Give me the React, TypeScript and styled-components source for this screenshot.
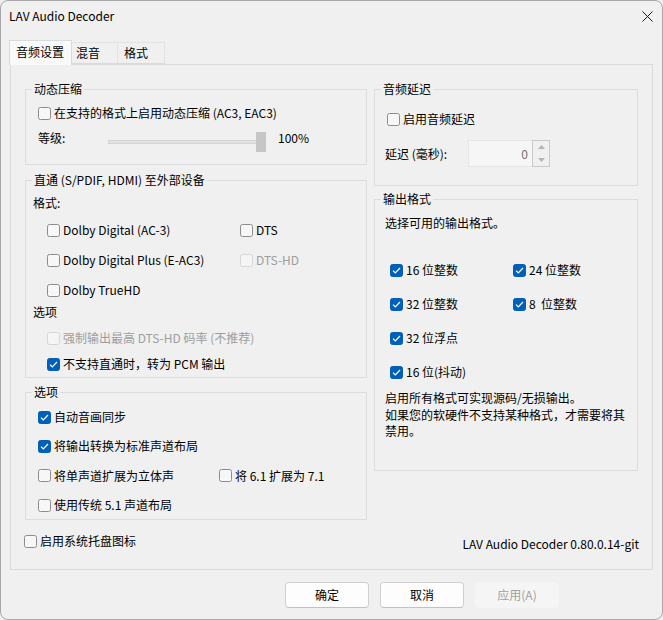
import React from "react";
import styled, { createGlobalStyle } from "styled-components";

const Global = createGlobalStyle`
  html, body { margin: 0; padding: 0; background: #f0f0f0; }
  body {
    font-family: "Noto Sans CJK SC", "Noto Sans", sans-serif;
    font-size: 12px;
    line-height: 16px;
    color: #000;
  }
  * { box-sizing: border-box; }
`;

const Window = styled.div`
  width: 663px;
  height: 620px;
  border: 1px solid #a8a8a8;
  border-radius: 8px;
  background: #f0f0f0;
  overflow: hidden;
  display: flex;
  flex-direction: column;
`;

const TitleBar = styled.div`
  height: 29px;
  display: flex;
  align-items: center;
  justify-content: space-between;
  padding: 0 9px 0 8px;
`;

const Title = styled.span`
  font-size: 12px;
  line-height: 16px;
`;

const CloseButton = styled.div`
  width: 12px;
  height: 12px;
  display: flex;
  align-items: center;
  justify-content: center;
  margin-top: 1px;
`;

const Body = styled.div`
  padding: 0 0 0 8px;
  display: flex;
  flex-direction: column;
`;

const TabStrip = styled.div`
  margin-top: 10px;
  height: 24px;
  display: flex;
  align-items: flex-end;
  position: relative;
  z-index: 1;
`;

const Tab = styled.div<{ $active?: boolean; $w: number; $last?: boolean; $pl: number }>`
  width: ${(p) => p.$w}px;
  height: ${(p) => (p.$active ? 25 : 22)}px;
  margin-bottom: ${(p) => (p.$active ? -1 : 0)}px;
  background: ${(p) => (p.$active ? "#f9f9f9" : "#f0f0f0")};
  border: 1px solid ${(p) => (p.$active ? "#dadada" : "#e3e3e3")};
  border-bottom: ${(p) => (p.$active ? "none" : "1px solid #dadada")};
  border-left-width: ${(p) => (p.$active ? 1 : 0)}px;
  border-right-width: ${(p) => (p.$active || p.$last ? 1 : 1)}px;
  display: flex;
  align-items: center;
  padding-left: ${(p) => p.$pl}px;
  padding-bottom: ${(p) => (p.$active ? 2 : 0)}px;
  font-size: 12px;
`;

const Panel = styled.div`
  margin-left: 1px;
  width: 643px;
  height: 506px;
  border: 1px solid #dadada;
  background: #f0f0f0;
  padding: 16px 13px 0 14px;
  display: grid;
  grid-template-columns: 342px 264px;
  column-gap: 7px;
  row-gap: 13px;
  align-content: start;
`;

const Column = styled.div`
  display: flex;
  flex-direction: column;
`;

const Group = styled.fieldset<{ $h: number; $mt?: number }>`
  margin: ${(p) => p.$mt ?? 0}px 0 0 0;
  height: ${(p) => p.$h}px;
  min-width: 0;
  border: 1px solid #dcdcdc;
  padding: 0;
  display: block;
`;

const Legend = styled.legend`
  margin-left: 6px;
  padding: 0 2px;
  font-size: 12px;
  line-height: 16px;
`;

const GroupBody = styled.div<{ $pt: number; $pl: number }>`
  padding: ${(p) => p.$pt}px 0 0 ${(p) => p.$pl}px;
`;

const Row = styled.div<{ $mt?: number; $ml?: number }>`
  display: flex;
  align-items: center;
  margin-top: ${(p) => p.$mt ?? 0}px;
  margin-left: ${(p) => p.$ml ?? 0}px;
`;

const Text = styled.div<{ $mt?: number; $disabled?: boolean }>`
  margin-top: ${(p) => p.$mt ?? 0}px;
  color: ${(p) => (p.$disabled ? "#9d9d9d" : "#000")};
  white-space: nowrap;
`;

const CheckGrid = styled.div<{ $cols: string; $gap: number; $mt?: number; $pl?: number }>`
  display: grid;
  grid-template-columns: ${(p) => p.$cols};
  row-gap: ${(p) => p.$gap}px;
  margin-top: ${(p) => p.$mt ?? 0}px;
  padding-left: ${(p) => p.$pl ?? 0}px;
`;

const CheckLabel = styled.label<{ $disabled?: boolean }>`
  display: flex;
  align-items: center;
  gap: 3px;
  height: 16px;
  white-space: nowrap;
  color: ${(p) => (p.$disabled ? "#9d9d9d" : "#000")};
`;

const Box = styled.span<{ $checked?: boolean; $disabled?: boolean }>`
  width: 13px;
  height: 13px;
  flex: none;
  border-radius: 2.5px;
  border: 1px solid
    ${(p) => (p.$checked ? "#005fb8" : p.$disabled ? "#d6d6d6" : "#8c8c8c")};
  background: ${(p) => (p.$checked ? "#005fb8" : p.$disabled ? "#f5f5f5" : "#f7f7f7")};
  display: flex;
  align-items: center;
  justify-content: center;
`;

const Check: React.FC<{ checked?: boolean; disabled?: boolean; children: React.ReactNode }> = ({
  checked,
  disabled,
  children,
}) => (
  <CheckLabel $disabled={disabled}>
    <Box $checked={checked} $disabled={disabled}>
      {checked && (
        <svg width="11" height="11" viewBox="0 0 11 11">
          <path d="M2 5.6 L4.3 7.9 L9 3" fill="none" stroke="#fff" strokeWidth="1.25" />
        </svg>
      )}
    </Box>
    <span>{children}</span>
  </CheckLabel>
);

const LevelRow = styled.div`
  display: flex;
  align-items: flex-start;
  margin-top: 9px;
  height: 22px;
`;

const LevelLabel = styled.div`
  width: 70px;
`;

const Slider = styled.div`
  width: 158px;
  height: 22px;
  display: flex;
  align-items: flex-start;
`;

const Track = styled.div`
  width: 148px;
  height: 4px;
  margin-top: 10px;
  background: #e3e3e3;
  border: 1px solid #d4d4d4;
  border-right: none;
`;

const Thumb = styled.div`
  width: 10px;
  height: 20px;
  margin-top: 2px;
  background: #c6c6c6;
`;

const Percent = styled.div`
  margin-left: 12px;
`;

const DelayLabel = styled.div`
  width: 83px;
`;

const SpinBox = styled.div`
  width: 82px;
  height: 27px;
  display: flex;
  border: 1px solid #e6e6e6;
  background: #f6f6f6;
`;

const SpinField = styled.div`
  flex: 1;
  display: flex;
  align-items: center;
  justify-content: flex-end;
  padding-right: 4px;
  color: #6e6e6e;
`;

const SpinButtons = styled.div`
  width: 18px;
  margin: -1px -1px -1px 0;
  border: 1px solid #c9c9c9;
  display: flex;
  flex-direction: column;
  background: #f0f0f0;
`;

const SpinHalf = styled.div`
  flex: 1;
  display: flex;
  align-items: center;
  justify-content: center;
`;

const Description = styled.div`
  margin-top: 10px;
  line-height: 16.5px;
`;

const BottomRow = styled.div`
  grid-column: 1 / span 2;
  display: flex;
  justify-content: space-between;
  align-items: flex-start;
  margin: 0 -1px 0 -1px;
`;

const Version = styled.div`
  margin-top: 3px;
`;

const ButtonRow = styled.div`
  margin-top: 12px;
  display: flex;
  justify-content: flex-end;
  gap: 11px;
  padding-right: 103px;
`;

const Button = styled.div<{ $disabled?: boolean }>`
  width: 84px;
  height: 26px;
  border-radius: 4px;
  display: flex;
  align-items: center;
  justify-content: center;
  background: ${(p) => (p.$disabled ? "#f5f5f5" : "#fdfdfd")};
  border: 1px solid ${(p) => (p.$disabled ? "#f5f5f5" : "#d0d0d0")};
  border-bottom-color: ${(p) => (p.$disabled ? "#f5f5f5" : "#c2c2c2")};
  color: ${(p) => (p.$disabled ? "#a0a0a0" : "#000")};
`;

const SpinArrow: React.FC<{ up?: boolean }> = ({ up }) => (
  <SpinHalf>
    <svg width="7" height="4" viewBox="0 0 7 4">
      <path d={up ? "M0 4 L3.5 0 L7 4 Z" : "M0 0 L3.5 4 L7 0 Z"} fill="#b4b4b4" />
    </svg>
  </SpinHalf>
);

export default function App() {
  return (
    <>
      <Global />
      <Window>
        <TitleBar>
          <Title>LAV Audio Decoder</Title>
          <CloseButton>
            <svg width="11" height="11" viewBox="0 0 11 11">
              <path d="M0.5 0.5 L10.5 10.5 M10.5 0.5 L0.5 10.5" stroke="#1a1a1a" strokeWidth="1" />
            </svg>
          </CloseButton>
        </TitleBar>
        <Body>
          <TabStrip>
            <Tab $active $w={63} $pl={6}>音频设置</Tab>
            <Tab $w={46} $pl={4}>混音</Tab>
            <Tab $w={47} $pl={6} $last>格式</Tab>
          </TabStrip>
          <Panel>
            <Column>
              <Group $h={84}>
                <Legend>动态压缩</Legend>
                <GroupBody $pt={8} $pl={12}>
                  <Check>在支持的格式上启用动态压缩 (AC3, EAC3)</Check>
                  <LevelRow>
                    <LevelLabel>等级:</LevelLabel>
                    <Slider>
                      <Track />
                      <Thumb />
                    </Slider>
                    <Percent>100%</Percent>
                  </LevelRow>
                </GroupBody>
              </Group>
              <Group $h={206} $mt={7}>
                <Legend>直通 (S/PDIF, HDMI) 至外部设备</Legend>
                <GroupBody $pt={7} $pl={7}>
                  <Text>格式:</Text>
                  <CheckGrid $cols="193px auto" $gap={14} $mt={11} $pl={14}>
                    <Check>Dolby Digital (AC-3)</Check>
                    <Check>DTS</Check>
                    <Check>Dolby Digital Plus (E-AC3)</Check>
                    <Check disabled>DTS-HD</Check>
                    <Check>Dolby TrueHD</Check>
                  </CheckGrid>
                  <Text $mt={6}>选项</Text>
                  <CheckGrid $cols="auto" $gap={10} $mt={10} $pl={14}>
                    <Check disabled>强制输出最高 DTS-HD 码率 (不推荐)</Check>
                    <Check checked>不支持直通时，转为 PCM 输出</Check>
                  </CheckGrid>
                </GroupBody>
              </Group>
              <Group $h={136} $mt={6}>
                <Legend>选项</Legend>
                <GroupBody $pt={9} $pl={12}>
                  <CheckGrid $cols="181px auto" $gap={13.4}>
                    <Check checked>自动音画同步</Check>
                    <span />
                    <Check checked>将输出转换为标准声道布局</Check>
                    <span />
                    <Check>将单声道扩展为立体声</Check>
                    <Check>将 6.1 扩展为 7.1</Check>
                    <Check>使用传统 5.1 声道布局</Check>
                  </CheckGrid>
                </GroupBody>
              </Group>
            </Column>
            <Column>
              <Group $h={105}>
                <Legend>音频延迟</Legend>
                <GroupBody $pt={14} $pl={12}>
                  <Check>启用音频延迟</Check>
                  <Row $mt={13} $ml={-2}>
                    <DelayLabel>延迟 (毫秒):</DelayLabel>
                    <SpinBox>
                      <SpinField>0</SpinField>
                      <SpinButtons>
                        <SpinArrow up />
                        <SpinArrow />
                      </SpinButtons>
                    </SpinBox>
                  </Row>
                </GroupBody>
              </Group>
              <Group $h={280} $mt={5}>
                <Legend>输出格式</Legend>
                <GroupBody $pt={8} $pl={10}>
                  <Text>选择可用的输出格式。</Text>
                  <CheckGrid $cols="123px auto" $gap={18} $mt={31} $pl={5}>
                    <Check checked>16 位整数</Check>
                    <Check checked>24 位整数</Check>
                    <Check checked>32 位整数</Check>
                    <Check checked>8&nbsp;&nbsp;位整数</Check>
                    <Check checked>32 位浮点</Check>
                    <span />
                    <Check checked>16 位(抖动)</Check>
                  </CheckGrid>
                  <Description>
                    启用所有格式可实现源码/无损输出。
                    <br />
                    如果您的软硬件不支持某种格式，才需要将其
                    <br />
                    禁用。
                  </Description>
                </GroupBody>
              </Group>
            </Column>
            <BottomRow>
              <Check>启用系统托盘图标</Check>
              <Version>LAV Audio Decoder 0.80.0.14-git</Version>
            </BottomRow>
          </Panel>
          <ButtonRow>
            <Button>确定</Button>
            <Button>取消</Button>
            <Button $disabled>应用(A)</Button>
          </ButtonRow>
        </Body>
      </Window>
    </>
  );
}
